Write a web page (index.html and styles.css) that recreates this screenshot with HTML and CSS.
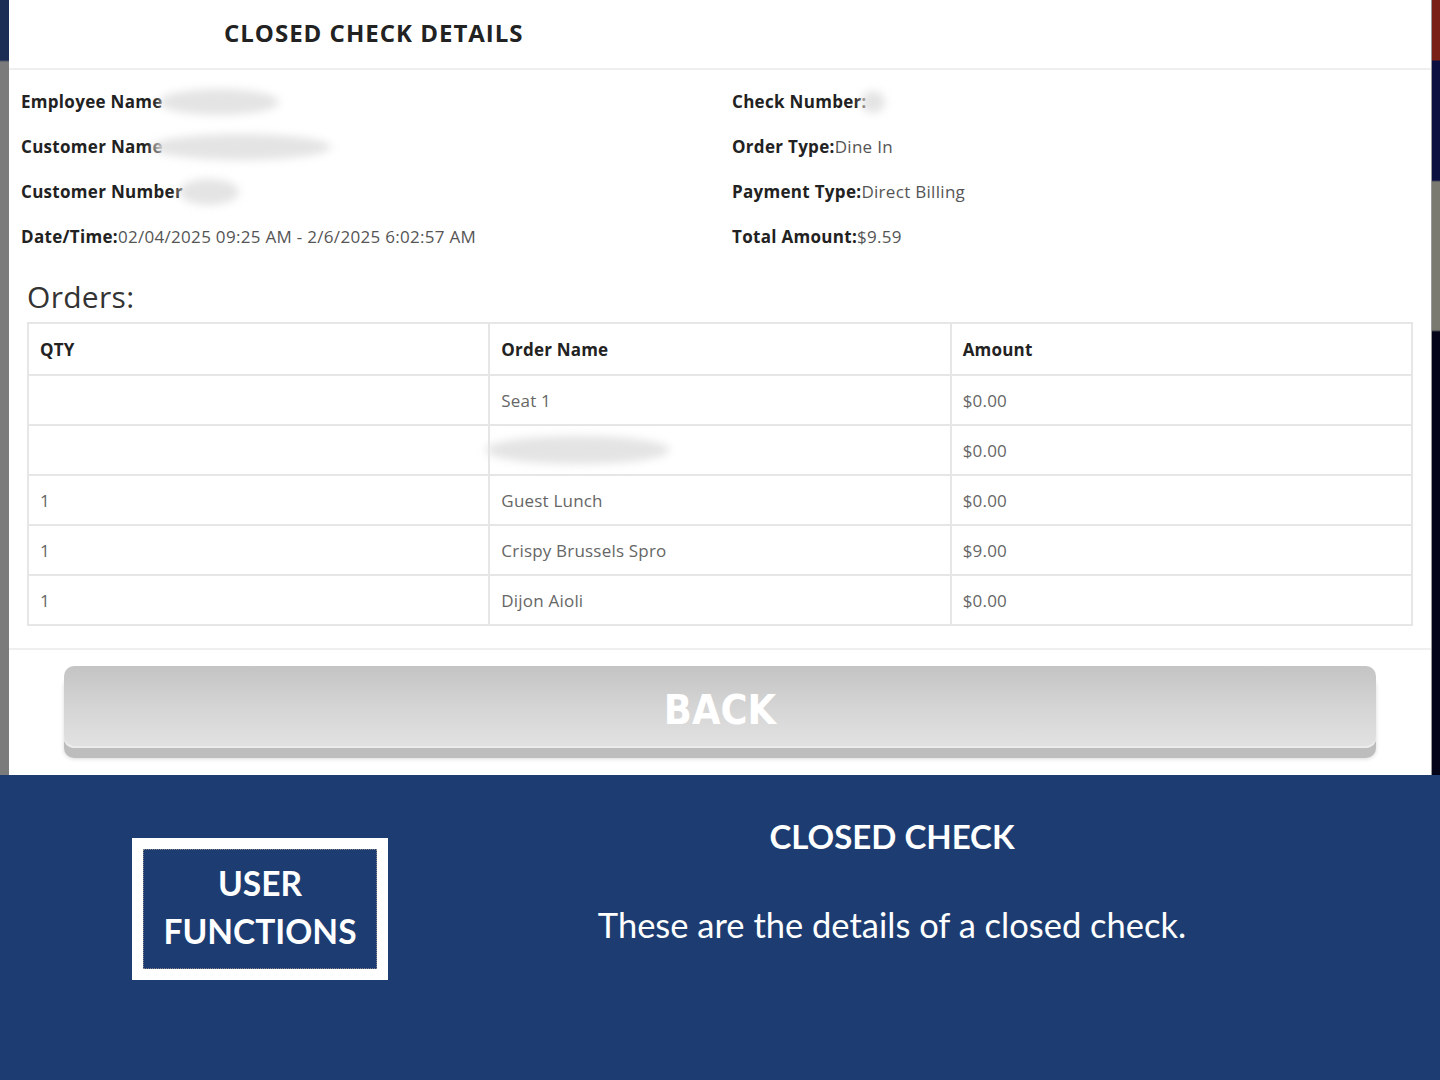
FILE: index.html
```html
<!DOCTYPE html>
<html lang="en">
<head>
<meta charset="utf-8">
<title>Closed Check Details</title>
<link rel="stylesheet" href="styles.css">
</head>
<body>
<div class="app">
  <div class="edge-left"></div>
  <div class="window">
    <div class="header"><h1 class="title">CLOSED CHECK DETAILS</h1></div>
    <div class="info">
      <div class="col">
        <div class="row"><b>Employee Name</b><span class="blob b-emp"></span></div>
        <div class="row"><b>Customer Name</b><span class="blob b-cust"></span></div>
        <div class="row"><b>Customer Number</b><span class="blob b-num"></span></div>
        <div class="row"><b>Date/Time:</b>02/04/2025 09:25 AM - 2/6/2025 6:02:57 AM</div>
      </div>
      <div class="col">
        <div class="row"><b>Check Number:</b><span class="blob b-chk"></span></div>
        <div class="row"><b>Order Type:</b>Dine In</div>
        <div class="row"><b>Payment Type:</b>Direct Billing</div>
        <div class="row"><b>Total Amount:</b>$9.59</div>
      </div>
    </div>
    <h2 class="orders-title">Orders:</h2>
    <table class="orders">
      <thead>
        <tr><th>QTY</th><th>Order Name</th><th>Amount</th></tr>
      </thead>
      <tbody>
        <tr><td></td><td>Seat 1</td><td>$0.00</td></tr>
        <tr><td></td><td><span class="blob b-item"></span></td><td>$0.00</td></tr>
        <tr><td>1</td><td>Guest Lunch</td><td>$0.00</td></tr>
        <tr><td>1</td><td>Crispy Brussels Spro</td><td>$9.00</td></tr>
        <tr><td>1</td><td>Dijon Aioli</td><td>$0.00</td></tr>
      </tbody>
    </table>
    <div class="footer">
      <button class="back">BACK</button>
    </div>
  </div>
  <div class="edge-right"></div>
</div>
<div class="caption">
  <div class="badge-wrap">
    <div class="badge"><div class="badge-inner">USER<br>FUNCTIONS</div></div>
  </div>
  <div class="desc">
    <h3 class="desc-title">CLOSED CHECK</h3>
    <p class="desc-text">These are the details of a closed check.</p>
  </div>
</div>
</body>
</html>
```
FILE: styles.css
```css
* { box-sizing: border-box; }
html, body { margin: 0; padding: 0; }
body {
  width: 1440px;
  height: 1080px;
  background: #1d3d72;
  overflow: hidden;
  font-family: "Open Sans", "Noto Sans", sans-serif;
}
.app {
  display: flex;
  height: 775px;
}
.edge-left {
  width: 9px;
  background: linear-gradient(to bottom, #1b2c55 0, #1b2c55 60px, #7b7b7b 62px, #7b7b7b 100%);
}
.edge-right {
  width: 9px;
  background: linear-gradient(to bottom,
    #7a2117 0, #7a2117 60px,
    #0c1040 61px, #0c1040 180px,
    #7a7a70 182px, #7a7a70 330px,
    #04041a 332px, #04041a 100%);
  border-left: 1px solid #999;
}
.window {
  flex: 1;
  background: #fff;
  display: flex;
  flex-direction: column;
}
.header {
  height: 70px;
  border-bottom: 2px solid #efefef;
  display: flex;
  align-items: center;
  padding-left: 215px;
  padding-bottom: 3px;
}
.title {
  margin: 0;
  font-size: 24px;
  font-weight: 700;
  color: #222;
  letter-spacing: 1px;
}
.info {
  display: grid;
  grid-template-columns: 711px 1fr;
  padding: 9px 0 0 12px;
}
.row {
  height: 45px;
  display: flex;
  align-items: center;
  font-size: 17px;
  color: #555;
  white-space: nowrap;
  letter-spacing: 0.3px;
}
.row b { color: #222; font-weight: 700; }
.blob {
  display: inline-block;
  height: 26px;
  border-radius: 50%;
  background: #e4e4e4;
  filter: blur(4px);
  position: relative;
}
.b-emp { width: 120px; margin-left: -4px; }
.b-cust { width: 180px; margin-left: -12px; }
.b-num { width: 60px; margin-left: -4px; }
.b-chk { width: 24px; height: 22px; margin-left: -6px; }
.b-item { width: 185px; height: 28px; margin-left: -16px; vertical-align: middle; }
.orders-title {
  margin: 18px 0 5px 18px;
  height: 40px;
  font-size: 30px;
  font-weight: 400;
  color: #333;
  line-height: 40px;
  letter-spacing: 0.3px;
}
.orders {
  margin-left: 18px;
  width: 1386px;
  border-collapse: collapse;
  table-layout: fixed;
}
.orders th, .orders td {
  border: 2px solid #e6e6e6;
  text-align: left;
  padding: 0 0 0 11px;
  font-size: 17px;
  letter-spacing: 0.2px;
}
.orders th {
  height: 52px;
  font-weight: 700;
  color: #222;
}
.orders td {
  height: 50px;
  color: #666;
}
.footer {
  margin-top: 22px;
  border-top: 2px solid #efefef;
  padding: 16px 0 0 55px;
}
.back {
  display: block;
  width: 1312px;
  height: 82px;
  border: none;
  border-radius: 10px;
  background: linear-gradient(to bottom, #c4c4c4 0%, #d6d6d6 55%, #e2e2e2 100%);
  box-shadow: 0 10px 0 #bdbdbd, 0 11px 4px rgba(0,0,0,0.15), inset 0 -2px 0 #ececec;
  color: #fff;
  font-family: "DejaVu Sans Condensed", "DejaVu Sans", sans-serif;
  font-stretch: condensed;
  font-weight: 700;
  font-size: 41px;
  padding: 6px 0 0;
  cursor: pointer;
}
.caption {
  height: 305px;
  display: flex;
}
.badge-wrap {
  padding: 63px 0 0 132px;
}
.badge {
  width: 256px;
  height: 142px;
  background: #fff;
  padding: 11px;
}
.badge-inner {
  height: 100%;
  background: #1d3d72;
  border: 1px dotted #8a8a8a;
  display: flex;
  align-items: center;
  justify-content: center;
  text-align: center;
  color: #fff;
  font-family: Lato, "Open Sans", sans-serif;
  font-weight: 700;
  font-size: 33.5px;
  line-height: 48px;
  padding-bottom: 4px;
}
.desc {
  flex: 1;
  margin-right: 44px;
  text-align: center;
  color: #fff;
  font-family: Lato, "Open Sans", sans-serif;
}
.desc-title {
  margin: 39px 0 0;
  font-size: 33px;
  font-weight: 700;
  line-height: 44px;
}
.desc-text {
  margin: 45px 0 0;
  font-size: 34.5px;
  line-height: 44px;
}
```
